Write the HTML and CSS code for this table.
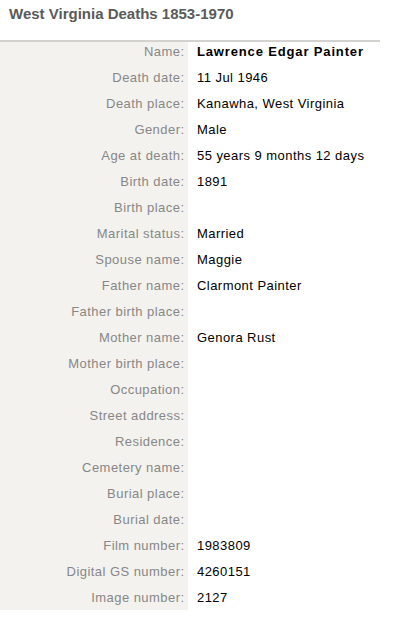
FILE: index.html
```html
<!DOCTYPE html>
<html>
<head>
<meta charset="utf-8">
<link rel="stylesheet" href="styles.css">
</head>
<body>
<h1 class="title">West Virginia Deaths 1853-1970</h1>
<div class="record">
  <div class="row"><div class="label">Name:</div><div class="value strong">Lawrence Edgar Painter</div></div>
  <div class="row"><div class="label">Death date:</div><div class="value">11 Jul 1946</div></div>
  <div class="row"><div class="label">Death place:</div><div class="value">Kanawha, West Virginia</div></div>
  <div class="row"><div class="label">Gender:</div><div class="value">Male</div></div>
  <div class="row"><div class="label">Age at death:</div><div class="value">55 years 9 months 12 days</div></div>
  <div class="row"><div class="label">Birth date:</div><div class="value">1891</div></div>
  <div class="row"><div class="label">Birth place:</div><div class="value"></div></div>
  <div class="row"><div class="label">Marital status:</div><div class="value">Married</div></div>
  <div class="row"><div class="label">Spouse name:</div><div class="value">Maggie</div></div>
  <div class="row"><div class="label">Father name:</div><div class="value">Clarmont Painter</div></div>
  <div class="row"><div class="label">Father birth place:</div><div class="value"></div></div>
  <div class="row"><div class="label">Mother name:</div><div class="value">Genora Rust</div></div>
  <div class="row"><div class="label">Mother birth place:</div><div class="value"></div></div>
  <div class="row"><div class="label">Occupation:</div><div class="value"></div></div>
  <div class="row"><div class="label">Street address:</div><div class="value"></div></div>
  <div class="row"><div class="label">Residence:</div><div class="value"></div></div>
  <div class="row"><div class="label">Cemetery name:</div><div class="value"></div></div>
  <div class="row"><div class="label">Burial place:</div><div class="value"></div></div>
  <div class="row"><div class="label">Burial date:</div><div class="value"></div></div>
  <div class="row"><div class="label">Film number:</div><div class="value">1983809</div></div>
  <div class="row"><div class="label">Digital GS number:</div><div class="value">4260151</div></div>
  <div class="row"><div class="label">Image number:</div><div class="value">2127</div></div>
</div>
</body>
</html>
```
FILE: styles.css
```css
html, body {
  margin: 0;
  padding: 0;
  background: #ffffff;
}
body {
  font-family: "Liberation Sans", Arial, sans-serif;
  font-size: 13px;
}
.title {
  margin: 0;
  padding: 5px 0 0 9px;
  height: 40px;
  box-sizing: border-box;
  font-size: 15px;
  line-height: 17px;
  font-weight: bold;
  color: #5a5a5a;
}
.record {
  width: 380px;
  border-top: 2px solid #d3d2ce;
  letter-spacing: 0.45px;
}
.row {
  display: flex;
  line-height: 26px;
}
.row:first-child {
  line-height: 20px;
}
.row:first-child .label,
.row:first-child .value {
  padding-bottom: 3px;
}
.row:last-child {
  line-height: 25px;
}
.label {
  width: 188px;
  flex: none;
  box-sizing: border-box;
  padding-right: 3.5px;
  text-align: right;
  background: #f3f2ee;
  color: #878787;
}
.value {
  padding-left: 9px;
  color: #000000;
}
.strong {
  font-weight: bold;
  letter-spacing: 0.85px;
}
```
